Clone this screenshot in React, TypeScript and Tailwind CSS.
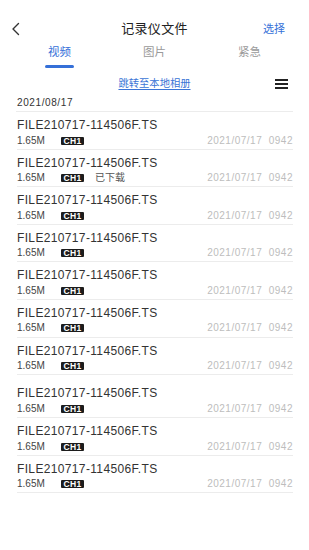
import React from "react";

const FILES = Array.from({ length: 10 }, (_, i) => ({
  id: i,
  name: "FILE210717-114506F.TS",
  size: "1.65M",
  channel: "CH1",
  downloaded: i === 1,
  time: "2021/07/17  0942",
  // 第8行上方留白稍大
  loose: i === 7,
}));

const TABS = ["视频", "图片", "紧急"];

function FileRow({ f }: { f: (typeof FILES)[number] }) {
  return (
    <li
      className={`box-border border-b border-[#ececec] ${
        f.loose ? "h-[43px] pt-[11px]" : "h-[37.6px] pt-[6px]"
      }`}
    >
      <div className="h-[14px] text-[12px] leading-[14px] tracking-[0.35px] text-[#333]">
        {f.name}
      </div>
      <div className="mt-[1.5px] flex h-[14px] items-center">
        <span className="w-[44px] text-[10px] leading-[14px] text-[#444]">
          {f.size}
        </span>
        <span className="flex h-[8px] w-[23px] items-center justify-center rounded-[1px] bg-[#1c1c1c] text-[8.5px] font-bold leading-[8px] tracking-[0.3px] text-white">
          {f.channel}
        </span>
        {f.downloaded && (
          <span className="ml-[11px] text-[10px] leading-[14px] text-[#555]">
            已下载
          </span>
        )}
        <span className="ml-auto whitespace-pre text-[10px] leading-[14px] tracking-[0.5px] text-[#bdbdbd]">
          {f.time}
        </span>
      </div>
    </li>
  );
}

export default function App() {
  return (
    <div className="h-[550px] w-[309px] bg-white font-['Liberation_Sans','Noto_Sans_CJK_SC',sans-serif]">
      {/* 顶栏 */}
      <div className="relative mt-[14px] flex h-[30px] items-center justify-center">
        <svg
          className="absolute left-[10px] top-[8px]"
          width="12"
          height="14"
          viewBox="0 0 12 14"
          fill="none"
        >
          <path
            d="M8.5 1.5L3 7l5.5 5.5"
            stroke="#333"
            strokeWidth="1.4"
            strokeLinecap="round"
            strokeLinejoin="round"
          />
        </svg>
        <span className="text-[13px] tracking-[0.3px] text-[#222]">
          记录仪文件
        </span>
        <span className="absolute right-[24px] text-[11px] text-[#3570d8]">
          选择
        </span>
      </div>

      {/* 标签页 */}
      <div className="grid grid-cols-3 px-[12px]">
        {TABS.map((t, i) => (
          <div key={t} className="flex flex-col items-center">
            <span
              className={`text-[11.5px] leading-[16px] ${
                i === 0 ? "text-[#3570d8]" : "text-[#9a9a9a]"
              }`}
            >
              {t}
            </span>
            <span
              className={`mt-[5px] h-[3px] w-[29px] rounded-full ${
                i === 0 ? "bg-[#3570d8]" : "bg-transparent"
              }`}
            />
          </div>
        ))}
      </div>

      {/* 跳转 + 菜单 */}
      <div className="relative mt-[8px] flex h-[16px] items-center justify-center">
        <span className="text-[10.3px] leading-[16px] text-[#3a74d6] underline underline-offset-2">
          跳转至本地相册
        </span>
        <div className="absolute right-[21px] top-[3px] flex h-[10px] w-[13px] flex-col justify-between">
          <span className="h-[2px] bg-[#222]" />
          <span className="h-[2px] bg-[#222]" />
          <span className="h-[2px] bg-[#222]" />
        </div>
      </div>

      <div className="mt-[4px] h-[15px] px-[17px] text-[10px] leading-[14px] tracking-[0.6px] text-[#333]">
        2021/08/17
      </div>

      <ul className="mx-[16px] border-t border-[#ececec] pl-[1px]">
        {FILES.map((f) => (
          <FileRow key={f.id} f={f} />
        ))}
      </ul>
    </div>
  );
}
